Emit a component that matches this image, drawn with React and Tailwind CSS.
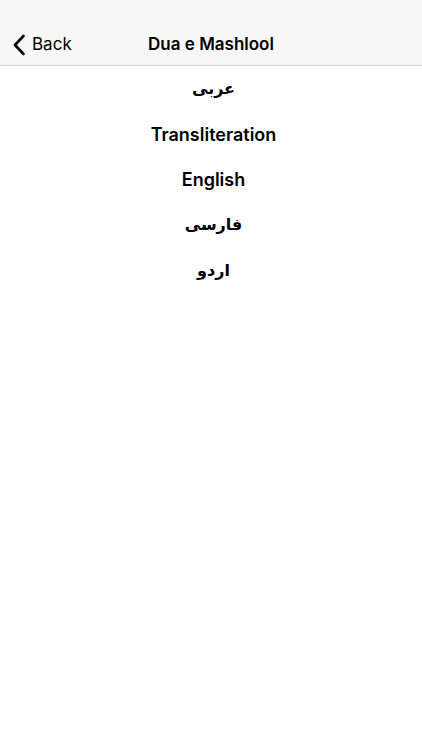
import React from "react";

const items = [
  { label: "عربى", ar: true },
  { label: "Transliteration" },
  { label: "English" },
  { label: "فارسى", ar: true },
  { label: "اردو", ar: true },
];

export default function App() {
  return (
    <div className="w-[422px] h-[750px] bg-white" style={{ fontFamily: "Inter, 'Liberation Sans', sans-serif" }}>
      <div className="h-[66px] bg-[#f7f7f7] border-b border-[#d8d8d8] flex items-end">
        <div className="relative w-full h-[46px] pt-[5px] flex items-center justify-center">
          <div className="absolute left-[12px] top-0 pt-[5px] h-full flex items-center gap-[6px] text-black">
            <svg width="14" height="22" viewBox="0 0 14 22" fill="none">
              <path d="M11.5 2 L3 11 L11.5 20" stroke="#000" strokeWidth="2.6" strokeLinecap="round" strokeLinejoin="round" />
            </svg>
            <span className="text-[17px] text-black">Back</span>
          </div>
          <span className="text-[17px] font-semibold text-black">Dua e Mashlool</span>
        </div>
      </div>
      <div className="flex flex-col items-center pl-[5px]">
        {items.map((it, i) => (
          <div key={i} className="h-[45.5px] flex items-center justify-center">
            <span
              className="text-[18px] font-semibold text-black"
              dir={it.ar ? "rtl" : undefined}
              style={it.ar ? { fontFamily: "'DejaVu Sans', 'Noto Sans', sans-serif", fontWeight: 700, fontSize: "16px" } : undefined}
            >
              {it.label}
            </span>
          </div>
        ))}
      </div>
    </div>
  );
}
